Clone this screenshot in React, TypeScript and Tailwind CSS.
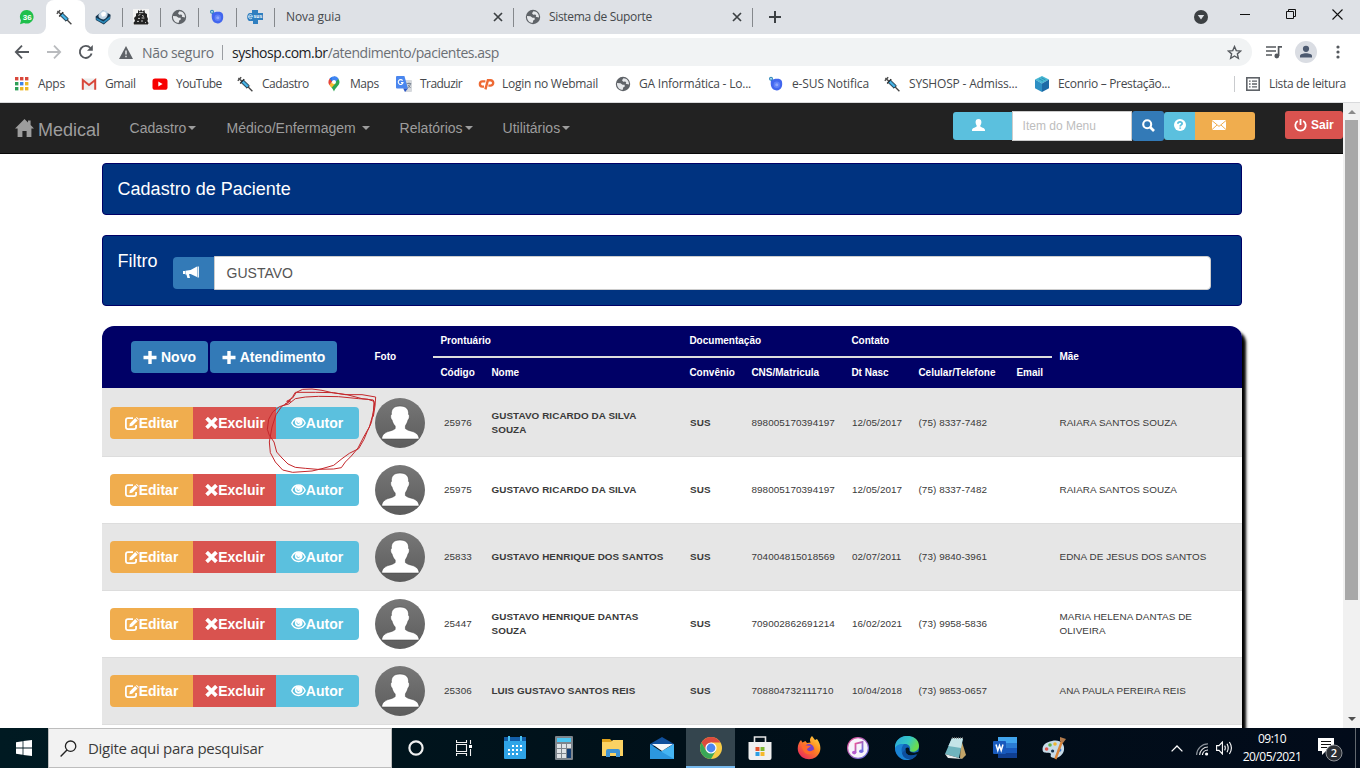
import React from "react";

type IconProps = { className?: string };

const Globe = () => (
  <svg width="16" height="16" viewBox="0 0 16 16">
    <circle cx="8" cy="8" r="7.2" fill="#5f6368" />
    <path d="M2 7 L5.5 7.2 L7.5 8.8 L9.6 8.8 L9.8 10.6 L8.2 11.6 L7.8 13.8 C4.2 14 1.8 11 2 7 Z" fill="#e6e8eb" />
    <path d="M8.4 2.2 L7 4.2 L8.2 5.8 L10.2 5.4 L11.2 6.6 L10.8 7.8 L14 8.6 C14.2 5 11.6 2 8.4 2.2 Z" fill="#e6e8eb" />
  </svg>
);

const Syringe = () => (
  <svg width="16" height="16" viewBox="0 0 16 16">
    <path d="M0.8 4.8 L4.2 1.2" stroke="#444" strokeWidth="1.3" />
    <path d="M1.4 2 L5 5.4" stroke="#555" strokeWidth="1.5" />
    <path d="M3.2 7.4 L7.2 3.2" stroke="#222" strokeWidth="1.5" />
    <path d="M4.2 6.6 L6.6 4.2 L12.4 9.8 L10 12.2 Z" fill="#2f9fd6" stroke="#26323c" strokeWidth="1" />
    <path d="M6 5.8 L10.6 10.2" stroke="#6cc4ea" strokeWidth="0.9" />
    <path d="M11.2 11 L15.4 15.2" stroke="#444" strokeWidth="1.3" />
  </svg>
);

const WhatsApp = () => (
  <svg width="16" height="16" viewBox="0 0 16 16">
    <path d="M8.2 1 A6.8 6.8 0 1 1 5 14 L1 15.2 L2 11.4 A6.8 6.8 0 0 1 8.2 1 Z" fill="#1fbf4c" />
    <text x="8.2" y="10.8" fontSize="8" fontWeight="700" fill="#fff" textAnchor="middle" fontFamily="Liberation Sans, sans-serif">36</text>
  </svg>
);

const BlueBox = () => (
  <svg width="16" height="16" viewBox="0 0 16 16">
    <path d="M.6 7.6 L8 1.4 L15.6 5.8 L15.2 10 L8.8 15.4 L.8 11 Z" fill="#15344e" />
    <path d="M1.4 8.8 L8.4 12.4 L15 7.2 L14.8 9.8 L8.8 14.6 L1.4 10.8 Z" fill="#2b89b8" />
    <path d="M3.4 7 C4 2 9 0 12 2.4 C13.8 5.4 12 9.4 8.4 10.4 C5.6 10 3.6 9 3.4 7 Z" fill="#c3d5e4" />
    <path d="M6 4.8 C7.4 2.4 9.8 2.2 11 4.2 L10.4 7 L7 7.8 Z" fill="#fff" />
  </svg>
);

const Crest = () => (
  <svg width="16" height="16" viewBox="0 0 16 16">
    <rect width="16" height="16" fill="#f4f4f4" />
    <path d="M5 1 L7 2.4 L8 .6 L9.4 2.4 L11.4 1 L12 4 L14 5 L14 7.4 L15 10 L14.4 12 L15.6 14 L15 15.4 L.8 15.4 L.6 13.6 L2 12 L1 9 L3 7 L3 4.6 L5 4 Z" fill="#222" />
    <path d="M6 3.6 H10.4 M5.4 6.4 L7.4 5.4 M9 6.4 L11 7.4 M5 9.4 H7 M8.6 9 H11.4 M4 12.4 H6 M8 12 H10 M12 13.6 H13" stroke="#ddd" strokeWidth="0.9" />
  </svg>
);

const Notifica = () => (
  <svg width="16" height="16" viewBox="0 0 16 16">
    <path d="M3 4 C6 2.6 12.6 1.6 13.8 5 C15.2 10 13 14.6 8.6 14.4 C3.6 14.2 2 9.6 3 4 Z" fill="#4266ee" />
    <circle cx="8.8" cy="8.8" r="3.2" fill="#5f80f8" />
    <circle cx="8.8" cy="8.8" r="1.5" fill="#8fa7fb" />
    <circle cx="3" cy="2.8" r="2" fill="#2a86b8" />
    <path d="M3 1.8 V3.8 M2 2.8 H4" stroke="#d8f0ff" strokeWidth="0.7" />
  </svg>
);

const ESus = () => (
  <svg width="16" height="16" viewBox="0 0 16 16">
    <path d="M5 1 H11 V4 H16 V11 H11 V15 H6 V12 H2 C-1 10 0 4 3 4 H5 Z" fill="#2f7fc0" />
    <path d="M1.6 7.8 H5.4 C5.2 4.8 1.6 5 1.6 7.8 C1.8 10.2 4.6 10 5.2 9" fill="none" stroke="#d6e8f6" strokeWidth="1" />
    <text x="6.6" y="9.4" fontSize="5" fontWeight="700" fill="#fff" fontFamily="Liberation Sans, sans-serif">sus</text>
  </svg>
);

const AppsGrid = () => (
  <svg width="14" height="14" viewBox="0 0 14 14">
    <g fill="#d9483b"><rect x="0" y="0" width="3.4" height="3.4" /><rect x="5" y="0" width="3.4" height="3.4" /><rect x="10" y="0" width="3.4" height="3.4" /></g>
    <rect x="0" y="5" width="3.4" height="3.4" fill="#2e9e57" /><rect x="5" y="5" width="3.4" height="3.4" fill="#3f83e8" /><rect x="10" y="5" width="3.4" height="3.4" fill="#eeb624" />
    <rect x="0" y="10" width="3.4" height="3.4" fill="#2e9e57" /><rect x="5" y="10" width="3.4" height="3.4" fill="#eeb624" /><rect x="10" y="10" width="3.4" height="3.4" fill="#eeb624" />
  </svg>
);

const Gmail = () => (
  <svg width="16" height="16" viewBox="0 0 16 16">
    <rect x="1" y="2.6" width="14" height="11.2" rx="1" fill="#eee" />
    <path d="M1.8 13.8 V4 L8 9 L14.2 4 V13.8" fill="none" stroke="#d8473a" strokeWidth="2" />
  </svg>
);

const YouTube = () => (
  <svg width="16" height="16" viewBox="0 0 16 16">
    <rect x="0.5" y="2.4" width="15" height="11.4" rx="2.6" fill="#f70000" />
    <path d="M6.3 5.6 L10.6 8 L6.3 10.5 Z" fill="#fff" />
  </svg>
);

const MapsPin = () => (
  <svg width="16" height="16" viewBox="0 0 16 16">
    <path d="M8 0.5 A5.6 5.6 0 0 1 13.5 6 C13.5 9.5 9.4 11.4 8 15.6 C7 12.8 5.4 11 4 9.4 L8 6 Z" fill="#2fa653" />
    <path d="M2.4 6.2 A5.6 5.6 0 0 1 3.8 2.4 L6.6 4.8 L3.8 9.3 C3 8.4 2.4 7.4 2.4 6.2 Z" fill="#e6443a" />
    <path d="M3.6 2.5 A5.6 5.6 0 0 1 6.4 .7 L8 4 L6 5.4 Z" fill="#1a73e8" />
    <path d="M6.2 .7 A5.6 5.6 0 0 1 12.6 2.8 L9 6.6 L5.4 3.6 Z" fill="#4285f4" />
    <path d="M3.4 9 L6.6 5.4 L9.4 7.6 L5.6 11.8 Z" fill="#f9bb2d" />
    <circle cx="8" cy="5.9" r="2" fill="#fff" />
  </svg>
);

const Translate = () => (
  <svg width="16" height="16" viewBox="0 0 16 16">
    <path d="M6 4 H15 Q16 4 16 5 V15 Q16 16 15 16 H9 Z" fill="#d6d9dd" />
    <path d="M1 0 H8.4 L12 12.6 H1 Q0 12.6 0 11.6 V1 Q0 0 1 0 Z" fill="#4a86ee" />
    <path d="M7.2 12.6 H12 L9 16 Z" fill="#2a56c6" />
    <path d="M6.6 4.6 A2.4 2.4 0 1 0 7 6.6 H5" fill="none" stroke="#fff" strokeWidth="1.1" />
    <path d="M10.6 7.6 H15.2 M13 6.6 V7.6 M14.4 7.8 C14 10 12.8 11.4 11.6 12 M12 9 L14.6 12" stroke="#6f7a8a" strokeWidth="0.9" fill="none" />
  </svg>
);

const CPanel = () => (
  <svg width="17" height="16" viewBox="0 0 17 16">
    <path d="M7.4 5.4 H4.6 A2.5 2.5 0 0 0 4.4 10.6 H6" fill="none" stroke="#ee6a34" strokeWidth="2.4" />
    <path d="M7.4 13.4 L9.9 4.2 H12.6 A2.6 2.6 0 0 1 12.4 9.6 H10.4" fill="none" stroke="#ee6a34" strokeWidth="2.4" />
  </svg>
);

const Cube = () => (
  <svg width="16" height="16" viewBox="0 0 16 16">
    <path d="M8 0 L15 3.6 L8 7.4 L1 3.6 Z" fill="#48b8d4" />
    <path d="M1 3.6 L8 7.4 V16 L1 12.2 Z" fill="#2d8fc4" />
    <path d="M15 3.6 L8 7.4 V16 L15 12.2 Z" fill="#1c6aa6" />
    <path d="M5 2.8 L9 5 M7.4 1.8 L11.4 3.8" stroke="#2c93b4" strokeWidth="1" />
  </svg>
);

const CloseX = () => (
  <svg width="10" height="10" viewBox="0 0 10 10"><path d="M1 1 L9 9 M9 1 L1 9" stroke="#3c4043" strokeWidth="1.7" /></svg>
);

const TabSep = () => <div className="h-[19px] w-px shrink-0 bg-[#85888c]" />;

function TabStrip() {
  return (
    <div className="flex h-[34px] items-center bg-[#dee1e6] font-['Open_Sans',sans-serif] text-[12px] text-[#45484c]">
      <div className="flex w-[46px] justify-center pl-[7px]"><WhatsApp /></div>
      <div className="relative flex h-[34px] w-[39px] items-center justify-center rounded-t-[8px] bg-white pr-[3px]">
        <Syringe />
        <svg className="absolute -left-[8px] bottom-0" width="8" height="8" viewBox="0 0 8 8"><path d="M8 0 V8 H0 A8 8 0 0 0 8 0" fill="#fff" /></svg>
        <svg className="absolute -right-[8px] bottom-0" width="8" height="8" viewBox="0 0 8 8"><path d="M0 0 V8 H8 A8 8 0 0 1 0 0" fill="#fff" /></svg>
      </div>
      <div className="flex w-[37px] justify-center pr-[1px]"><BlueBox /></div>
      <TabSep />
      <div className="flex w-[37px] justify-center pr-[1px]"><Crest /></div>
      <TabSep />
      <div className="flex w-[37px] justify-center pr-[1px]"><Globe /></div>
      <TabSep />
      <div className="flex w-[37px] justify-center pr-[1px]"><Notifica /></div>
      <TabSep />
      <div className="flex w-[37px] justify-center pr-[1px]"><ESus /></div>
      <TabSep />
      <div className="flex w-[238px] items-center justify-between pr-[10px] pl-[11px]">
        <span className="tracking-[-0.1px]">Nova guia</span><CloseX />
      </div>
      <TabSep />
      <div className="flex w-[238px] items-center pr-[10px] pl-[11px]">
        <Globe /><span className="ml-[8px] flex-1 whitespace-nowrap tracking-[-0.33px]">Sistema de Suporte</span><CloseX />
      </div>
      <TabSep />
      <svg className="ml-[16px]" width="12" height="12" viewBox="0 0 12 12"><path d="M6 0 V12 M0 6 H12" stroke="#3c4043" strokeWidth="2" /></svg>
      <div className="ml-auto flex items-start pb-[4px] pr-[17px]">
        <svg className="mt-[4px] mr-[32px]" width="14" height="14" viewBox="0 0 14 14"><circle cx="7" cy="7" r="7" fill="#3c4043" /><path d="M3.8 5 H10.2 L7 9.4 Z" fill="#dee1e6" /></svg>
        <svg className="mr-[36px]" width="10" height="14" viewBox="0 0 10 14"><path d="M0 8.5 H10" stroke="#111" /></svg>
        <svg className="mt-[3px] mr-[36px]" width="10" height="10" viewBox="0 0 10 10"><path d="M0.5 2.5 H7.5 V9.5 H0.5 Z M2.5 2.5 V0.5 H9.5 V7.5 H7.5" fill="none" stroke="#111" /></svg>
        <svg className="mt-[3px]" width="11" height="11" viewBox="0 0 11 11"><path d="M0.5 0.5 L10.5 10.5 M10.5 0.5 L0.5 10.5" stroke="#111" strokeWidth="1.1" /></svg>
      </div>
    </div>
  );
}

function Toolbar() {
  return (
    <div className="flex h-[36px] items-center bg-white pr-[16px] pl-[14px] font-['Open_Sans',sans-serif] text-[14px]">
      <svg width="16" height="16" viewBox="0 0 16 16"><path d="M15 8 H2 M8 1.6 L1.8 8 L8 14.4" fill="none" stroke="#55595e" strokeWidth="1.8" /></svg>
      <svg className="ml-[16px]" width="16" height="16" viewBox="0 0 16 16"><path d="M1 8 H14 M8 1.6 L14.2 8 L8 14.4" fill="none" stroke="#b9bbbe" strokeWidth="1.8" /></svg>
      <svg className="ml-[16px]" width="16" height="16" viewBox="0 0 16 16"><path d="M13.6 9.6 A6 6 0 1 1 12.4 4" fill="none" stroke="#55595e" strokeWidth="1.9" /><path d="M14.8 1 V6.8 H9 Z" fill="#55595e" /></svg>
      <div className="ml-[14px] flex h-[28px] w-[1144px] items-center rounded-full bg-[#f1f3f4] pr-[10px] pl-[11px]">
        <svg width="14" height="13" viewBox="0 0 14 13"><path d="M7 0 L14 13 H0 Z" fill="#5f6368" /><path d="M7 4.4 V8.6 M7 9.8 V11.2" stroke="#f1f3f4" strokeWidth="1.4" /></svg>
        <span className="ml-[9px] w-[80px] whitespace-nowrap text-[#6b6f74] tracking-[-0.34px]">Não seguro</span>
        <div className="mr-[9px] h-[15px] w-px bg-[#9a9da1]" />
        <span className="flex-1 whitespace-nowrap text-[#6b6f74] tracking-[-0.48px]"><span className="text-[#202124]">syshosp.com.br</span>/atendimento/pacientes.asp</span>
        <svg width="15" height="15" viewBox="0 0 24 24"><path d="M12 2.5 L14.8 9 L22 9.6 L16.6 14.2 L18.2 21.2 L12 17.5 L5.8 21.2 L7.4 14.2 L2 9.6 L9.2 9 Z" fill="none" stroke="#55595e" strokeWidth="2.2" /></svg>
      </div>
      <svg className="ml-[13px]" width="18" height="14" viewBox="0 0 18 14"><path d="M1 2 H11 M1 6 H11 M1 10 H7" stroke="#55595e" strokeWidth="1.7" /><path d="M13.6 11 V1.8 H17" stroke="#55595e" strokeWidth="1.7" fill="none" /><circle cx="11.8" cy="11" r="2.4" fill="#55595e" /></svg>
      <svg className="ml-[12px]" width="22" height="22" viewBox="0 0 22 22"><circle cx="11" cy="11" r="11" fill="#dadde3" /><circle cx="11" cy="7.8" r="3.1" fill="#4d5a70" /><path d="M5 16.6 V15 C5 11.4 17 11.4 17 15 V16.6 Z" fill="#4d5a70" /></svg>
      <svg className="ml-auto mr-[4px]" width="4" height="14" viewBox="0 0 4 14"><g fill="#55595e"><circle cx="2" cy="2" r="1.6" /><circle cx="2" cy="7" r="1.6" /><circle cx="2" cy="12" r="1.6" /></g></svg>
    </div>
  );
}

const bookmarks = [
  { icon: <AppsGrid />, label: "Apps", w: "w-[66px]", g: "gap-[9px] tracking-[-0.28px]" },
  { icon: <Gmail />, label: "Gmail", w: "w-[71px]", g: "gap-[8px] tracking-[-0.38px]" },
  { icon: <YouTube />, label: "YouTube", w: "w-[85px]", g: "gap-[8px] tracking-[-0.5px]" },
  { icon: <Syringe />, label: "Cadastro", w: "w-[89px]", g: "gap-[9px] tracking-[-0.45px]" },
  { icon: <MapsPin />, label: "Maps", w: "w-[70px]", g: "gap-[8px] tracking-[-0.45px]" },
  { icon: <Translate />, label: "Traduzir", w: "w-[82px]", g: "gap-[8px] tracking-[-0.55px]" },
  { icon: <CPanel />, label: "Login no Webmail", w: "w-[137px]", g: "gap-[7px] tracking-[-0.26px]" },
  { icon: <Globe />, label: "GA Informática - Lo...", w: "w-[153px]", g: "gap-[8px] tracking-[-0.22px]" },
  { icon: <Notifica />, label: "e-SUS Notifica", w: "w-[116px]", g: "gap-[8px] tracking-[-0.12px]" },
  { icon: <Syringe />, label: "SYSHOSP - Admiss...", w: "w-[150px]", g: "gap-[9px] tracking-[-0.18px]" },
  { icon: <Cube />, label: "Econrio – Prestação...", w: "w-[200px]", g: "gap-[8px] tracking-[-0.32px]" },
];

function Bookmarks() {
  return (
    <div className="flex h-[33px] items-center border-b border-[#d9dadc] bg-white pb-[4px] pl-[15px] font-['Open_Sans',sans-serif] text-[12px] text-[#45484c]">
      {bookmarks.map((b, i) => (
        <div key={i} className={`flex shrink-0 items-center whitespace-nowrap ${b.w} ${b.g}`}>{b.icon}<span>{b.label}</span></div>
      ))}
      <div className="h-[16px] w-px bg-[#c9cbce]" />
      <svg className="ml-[11px]" width="14" height="14" viewBox="0 0 14 14"><rect x="0.8" y="0.8" width="12.4" height="12.4" fill="none" stroke="#5f6368" strokeWidth="1.6" /><path d="M3 4.2 H4.6 M6 4.2 H11 M3 7 H4.6 M6 7 H11 M3 9.8 H4.6 M6 9.8 H11" stroke="#5f6368" strokeWidth="1.3" /></svg>
      <span className="ml-[9px] whitespace-nowrap tracking-[-0.34px]">Lista de leitura</span>
    </div>
  );
}

const Caret = ({ className = "" }: IconProps) => (
  <svg className={className} width="8" height="4" viewBox="0 0 8 4"><path d="M0 0 H8 L4 4 Z" fill="#9d9d9d" /></svg>
);

const UserIcon = () => (
  <svg width="13" height="12" viewBox="0 0 13 12"><path d="M6.5 0 C8.8 0 9.6 1.6 9.4 3.8 C9.2 5.4 8.4 6.2 8.2 7 C8.4 8.6 12.8 8.6 13 11 V12 H0 V11 C.2 8.6 4.6 8.6 4.8 7 C4.6 6.2 3.8 5.4 3.6 3.8 C3.4 1.6 4.2 0 6.5 0 Z" fill="#fff" /></svg>
);

const Envelope = () => (
  <svg width="14" height="10" viewBox="0 0 14 10"><rect width="14" height="10" fill="#fff" /><path d="M0 0.6 L7 6.4 L14 0.6 M0 9.6 L5 5 M14 9.6 L9 5" fill="none" stroke="#f0ad4e" strokeWidth="1" /></svg>
);

function NavBar() {
  return (
    <div className="flex h-[51px] shrink-0 border-b border-[#080808] bg-[#222] font-['Liberation_Sans',sans-serif] text-[14px] text-[#9d9d9d]">
      <div className="flex w-[129.6px] items-start pt-[15px] pl-[15px]">
        <svg className="mt-[1px]" width="19" height="18" viewBox="0 0 19 18"><path d="M9.5 0 L13 3.4 V1.6 H15.6 V6 L19 9.6 H16.4 V18 H11.6 V12 H7.4 V18 H2.6 V9.6 H0 Z" fill="#9d9d9d" /></svg>
        <span className="ml-[4px] text-[18px] leading-[24px]">Medical</span>
      </div>
      <div className="flex h-[50px] w-[97px] items-center"><span>Cadastro</span><Caret className="ml-[2px]" /></div>
      <div className="flex h-[50px] w-[173px] items-center"><span>Médico/Enfermagem</span><Caret className="ml-[6px]" /></div>
      <div className="flex h-[50px] w-[103px] items-center"><span>Relatórios</span><Caret className="ml-[2px]" /></div>
      <div className="flex h-[50px] items-center"><span>Utilitários</span><Caret className="ml-[2px]" /></div>
      <div className="ml-auto flex items-start pt-[8px]">
        <div className="mt-[1px] flex h-[28px] w-[59px] items-center justify-center rounded-l-[3px] bg-[#5bc0de] pr-[9px] pb-[2px]"><UserIcon /></div>
        <div className="flex h-[30px] w-[120px] items-center border border-[#ccc] bg-white pl-[9.6px] text-[12px] text-[#bdbdbd]">Item do Menu</div>
        <div className="flex h-[30px] w-[32px] items-center justify-center rounded-[3px] bg-[#337ab7] pb-[2px]">
          <svg width="13" height="13" viewBox="0 0 13 13"><circle cx="5.2" cy="5.2" r="4" fill="none" stroke="#fff" strokeWidth="2.1" /><path d="M8 8 L12 12" stroke="#fff" strokeWidth="2.6" /></svg>
        </div>
        <div className="mt-[1px] flex h-[28px] w-[31px] items-center justify-center rounded-l-[3px] bg-[#5bc0de] pb-[2px]">
          <svg width="12" height="12" viewBox="0 0 12 12"><circle cx="6" cy="6" r="6" fill="#fff" /><path d="M3.9 4.8 C3.9 2.4 8.2 2.4 8.1 4.6 C8 6 6.2 5.8 6.2 7.4 M6.2 8.4 V9.8" fill="none" stroke="#5bc0de" strokeWidth="1.8" /></svg>
        </div>
        <div className="mt-[1px] flex h-[28px] w-[60px] items-center justify-center rounded-r-[3px] bg-[#f0ad4e] pr-[12px] pb-[2px]"><Envelope /></div>
        <div className="ml-[30px] flex h-[28px] w-[58px] items-center rounded-[3px] bg-[#d9534f] pl-[9px] text-[12px] font-bold text-white">
          <svg className="mr-[4px]" width="13" height="13" viewBox="0 0 13 13"><path d="M3.8 2 A5.2 5.2 0 1 0 9.2 2" fill="none" stroke="#fff" strokeWidth="1.8" /><path d="M6.5 0 V6" stroke="#fff" strokeWidth="1.8" /></svg>
          Sair
        </div>
      </div>
    </div>
  );
}

const Plus = () => (
  <svg width="14" height="13" viewBox="0 0 14 13"><path d="M7 0 V13 M0.5 6.5 H13.5" stroke="#fff" strokeWidth="3.4" /></svg>
);
const EditIcon = () => (
  <svg width="14" height="13" viewBox="0 0 14 13"><path d="M8 1.2 H3 Q.9 1.2 .9 3.4 V10 Q.9 12.1 3 12.1 H9 Q11.1 12.1 11.1 10 V8" fill="none" stroke="#fff" strokeWidth="1.8" /><path d="M4.4 9.2 L4.8 6.4 L10.2 1 L12.6 3.4 L7.2 8.8 Z" fill="#fff" /><path d="M11 .5 L11.8 0 L14 2.2 L13.2 2.8 Z" fill="#fff" /></svg>
);
const RemoveIcon = () => (
  <svg width="13" height="12" viewBox="0 0 13 12"><path d="M1.6 1.2 L11.4 10.8 M11.4 1.2 L1.6 10.8" stroke="#fff" strokeWidth="3.8" /></svg>
);
const EyeIcon = () => (
  <svg width="15" height="12" viewBox="0 0 15 12"><path d="M.8 6 C3.6 -.6 11.4 -.6 14.2 6 C11.4 12 3.6 12 .8 6 Z" fill="none" stroke="#fff" strokeWidth="1.4" /><circle cx="7.7" cy="5" r="3.8" fill="#fff" /><path d="M5.8 4.6 C5.6 6.4 7.4 7 8.6 6" fill="none" stroke="#5bc0de" strokeWidth="0.9" /></svg>
);
const Avatar = () => (
  <svg width="50" height="50" viewBox="0 0 50 50">
    <defs><linearGradient id="av" x1="0" y1="0" x2="0" y2="1"><stop offset="0" stopColor="#777" /><stop offset="1" stopColor="#5c5c5c" /></linearGradient></defs>
    <circle cx="25" cy="25" r="25" fill="url(#av)" />
    <path d="M25 8 C31 8 34 11 33.6 16.5 C35 17 34.4 21 33 22 C32.4 25 31 26.4 30.4 28 V30.6 C33 33.2 38 32.8 41 35.2 C43.4 37 44 38.6 44 41 H6.8 C6.8 38.6 7.4 37 9.8 35.2 C12.8 32.8 17.6 33.2 20.2 30.6 V28 C18.6 26.4 17.6 24.6 17 22 C15.6 21 15 17 16.4 16.5 C16 11 18.8 8 25 8 Z" fill="#fff" stroke="#3c3c3c" strokeWidth="0.5" />
  </svg>
);

const patients = [
  { code: "25976", name: "GUSTAVO RICARDO DA SILVA SOUZA", cns: "898005170394197", date: "12/05/2017", phone: "(75) 8337-7482", mother: "RAIARA SANTOS SOUZA" },
  { code: "25975", name: "GUSTAVO RICARDO DA SILVA", cns: "898005170394197", date: "12/05/2017", phone: "(75) 8337-7482", mother: "RAIARA SANTOS SOUZA" },
  { code: "25833", name: "GUSTAVO HENRIQUE DOS SANTOS", cns: "704004815018569", date: "02/07/2011", phone: "(73) 9840-3961", mother: "EDNA DE JESUS DOS SANTOS" },
  { code: "25447", name: "GUSTAVO HENRIQUE DANTAS SOUZA", cns: "709002862691214", date: "16/02/2021", phone: "(73) 9958-5836", mother: "MARIA HELENA DANTAS DE OLIVEIRA" },
  { code: "25306", name: "LUIS GUSTAVO SANTOS REIS", cns: "708804732111710", date: "10/04/2018", phone: "(73) 9853-0657", mother: "ANA PAULA PEREIRA REIS" },
];

function PatientRow({ p, i }: { p: (typeof patients)[number]; i: number }) {
  return (
    <div className={`flex items-center border-[#ddd] pl-[8px] ${i === 0 ? "h-[68px] pt-[2px]" : "h-[67px] border-t"} ${i % 2 === 0 ? "bg-[#e6e6e6]" : "bg-white"}`}>
      <div className="flex h-[32px] w-[249px] overflow-hidden rounded-[4px] text-[14px] font-bold tracking-normal text-white">
        <div className="flex w-[83px] items-center justify-center bg-[#f0ad4e]"><EditIcon />Editar</div>
        <div className="flex w-[83px] items-center justify-center bg-[#d9534f] pl-[1px]"><RemoveIcon />Excluir</div>
        <div className="flex w-[83px] items-center justify-center bg-[#5bc0de] pr-[1px]"><EyeIcon />Autor</div>
      </div>
      <div className="ml-[16px] w-[69px]"><Avatar /></div>
      <div className="w-[47.5px]">{p.code}</div>
      <div className="w-[198.5px] pr-[20px] font-bold text-[#3a3a3a]">{p.name}</div>
      <div className="w-[61.5px] font-bold tracking-[0.1px]">SUS</div>
      <div className="w-[100.5px]">{p.cns}</div>
      <div className="w-[66.5px]">{p.date}</div>
      <div className="w-[141px]">{p.phone}</div>
      <div className="w-[150px]">{p.mother}</div>
    </div>
  );
}

function TableHead() {
  return (
    <div className="flex h-[62px] rounded-t-[12px] bg-[#006] text-[10px] leading-[14px] font-bold text-white">
      <div className="flex w-[272.5px] gap-[2px] pt-[15px] pl-[29px] text-[14px]">
        <div className="flex h-[32px] w-[77px] items-center justify-center gap-[4px] rounded-[4px] bg-[#337ab7]"><Plus />Novo</div>
        <div className="flex h-[32px] w-[127px] items-center justify-center gap-[4px] rounded-[4px] bg-[#337ab7]"><Plus />Atendimento</div>
      </div>
      <div className="flex w-[58.5px] items-center">Foto</div>
      <div className="w-[619px]">
        <div className="flex h-[30px] items-center pl-[7.4px]">
          <div className="w-[249px]">Prontuário</div><div className="w-[162px]">Documentação</div><div>Contato</div>
        </div>
        <div className="h-[2px] bg-[#ddd]" />
        <div className="flex h-[30px] items-center pl-[7.4px]">
          <div className="w-[51px]">Código</div><div className="w-[198px]">Nome</div><div className="w-[62px]">Convênio</div><div className="w-[100px]">CNS/Matricula</div><div className="w-[67px]">Dt Nasc</div><div className="w-[98px]">Celular/Telefone</div><div>Email</div>
        </div>
      </div>
      <div className="flex items-center pl-[7.4px]">Mãe</div>
    </div>
  );
}

const Scribble = () => (
  <svg className="pointer-events-none absolute top-[56px] left-[160px]" width="124" height="100" viewBox="0 0 372 300">
    <g fill="none" stroke="#c4272b" strokeWidth="3" strokeLinejoin="round">
      <path d="M69 66 L86 57 L74 58 L92 48 L103 31 L122 22 L150 21 L180 25 L215 33 L255 38 L300 50 L334 54 L338 66 L332 100 L322 135 L305 165 L288 198 L268 222 L250 240 L238 257 L215 261 L166 262 L130 259 L100 256 L78 246 L60 228 L44 210 L36 180 L22 160 L16 142 L20 112 L32 90 L52 74 L80 66 L100 50 L130 45 L170 43 L230 44 L290 50 L318 52 L336 58 L334 92 L328 122 L316 148 L306 172 L290 200 L262 214 L240 230 L215 250 L180 260 L150 267 L92 271 L62 264 L40 240 L25 212 L22 180 L30 135 L42 98 L60 72 L76 64 L92 44 L100 31 L160 31 L215 32 L250 38 L300 38 L341 45 L339 72 L334 104" />
    </g>
  </svg>
);

function Page() {
  return (
    <div className="flex h-[625px] flex-col overflow-hidden font-['Liberation_Sans',sans-serif]">
      <NavBar />
      <div className="mt-[9px] ml-[102px] w-[1140px]">
        <div className="h-[52px] rounded-[4px] border border-[#006] bg-[#003380] pt-[15px] pl-[14.6px] text-[18px] leading-[20px] text-white">Cadastro de Paciente</div>
        <div className="mt-[20px] flex h-[71px] rounded-[4px] border border-[#006] bg-[#003380] pl-[14.6px] text-white">
          <div className="w-[55.4px] pt-[15px] text-[18px] leading-[20px]">Filtro</div>
          <div className="mt-[21px] flex h-[32px] w-[41px] items-center rounded-l-[4px] bg-[#337ab7] pl-[10px]">
            <svg width="17" height="14" viewBox="0 0 17 14"><path d="M0 5 H2 V8 H0 Z M2.4 4.8 L7.6 4 L14 .6 V11 L7.6 8 H6 L7 12 H4.4 L3.4 8.4 H2.4 Z" fill="#fff" /><path d="M15.2 .6 V11.4" stroke="#e6eef5" strokeWidth="1.6" /></svg>
          </div>
          <div className="mt-[20px] flex h-[34px] w-[997px] items-center rounded-r-[4px] border border-[#ccc] bg-white pl-[11.6px] text-[14px] text-[#555]">GUSTAVO</div>
        </div>
        <div className="relative mt-[20px] h-[460px] rounded-t-[12px] bg-white shadow-[4px_5px_3px_#000]">
          <TableHead />
          <div className="border-b border-[#ddd] text-[9.9px] leading-[14px] tracking-[0.07px] text-[#3a3a3a]">
            {patients.map((p, i) => <PatientRow key={p.code} p={p} i={i} />)}
          </div>
          <Scribble />
        </div>
      </div>
    </div>
  );
}

function Scrollbar() {
  return (
    <div className="flex h-[625px] w-[17px] flex-col items-center bg-[#f1f1f1]">
      <svg className="mt-[7px]" width="8" height="4" viewBox="0 0 8 4"><path d="M0 4 H8 L4 0 Z" fill="#8a8a8a" /></svg>
      <div className="mt-[6px] h-[480px] w-[13px] bg-[#a8a8a8]" />
      <svg className="mt-auto mb-[7px]" width="8" height="4" viewBox="0 0 8 4"><path d="M0 0 H8 L4 4 Z" fill="#505050" /></svg>
    </div>
  );
}

const taskIcons = [
  <svg key="cal" width="24" height="24" viewBox="0 0 24 24"><rect x="1" y="1" width="22" height="22" rx="1" fill="#2fa4e7" /><rect x="1" y="1" width="22" height="4" fill="#135ea8" /><path d="M6 0 V5 M18 0 V5" stroke="#48c3f4" strokeWidth="2" /><path d="M9 10 H19 M5 14 H19 M5 18 H15" stroke="#fff" strokeWidth="2" strokeDasharray="2 2" /></svg>,
  <svg key="calc" width="20" height="24" viewBox="0 0 20 24"><rect x="1" width="18" height="24" rx="1" fill="#7d858c" /><rect x="3" y="2" width="14" height="4" fill="#4cc6f2" /><g fill="#dfe3e6"><rect x="3" y="8" width="4" height="4" /><rect x="8" y="8" width="4" height="4" /><rect x="13" y="8" width="4" height="4" /><rect x="3" y="13" width="4" height="4" /><rect x="8" y="13" width="4" height="4" /><rect x="3" y="18" width="4" height="4" /><rect x="8" y="18" width="4" height="4" /></g><rect x="13" y="13" width="4" height="9" fill="#143e73" /></svg>,
  <svg key="fold" width="24" height="24" viewBox="0 0 24 24"><path d="M1 3 H9 L11 5 H22 V20 H1 Z" fill="#e0a21c" /><path d="M1 6 H10 L12 4 H22 V20 H1 Z" fill="#fbd263" /><path d="M5 21 V15 Q5 13 7 13 H17 Q19 13 19 15 V21 H15 V17 H9 V21 Z" fill="#3f93d3" /></svg>,
  <svg key="mail" width="24" height="24" viewBox="0 0 24 24"><path d="M0 8 L12 1 L24 8 V10 H0 Z" fill="#10509c" /><path d="M0 8 L12 16 L24 8 V23 H0 Z" fill="#2c97df" /><path d="M24 8 V23 L11 15.4 Z" fill="#45b5f3" /><path d="M2 8 H23 L12 15 Z" fill="#f5f8fb" /></svg>,
  <svg key="chr" width="24" height="24" viewBox="0 0 24 24"><circle cx="12" cy="12" r="11" fill="#f7cb46" /><path d="M2.5 6.5 A11 11 0 0 1 21.5 6.5 H12 L7.2 14.8 Z" fill="#dd4b3e" /><path d="M2.5 6.5 A11 11 0 0 0 12 23 L16.8 14.7 L7.2 14.7 Z" fill="#3aa757" /><circle cx="12" cy="12" r="5.6" fill="#fff" /><circle cx="12" cy="12" r="4.4" fill="#4c87f0" /></svg>,
  <svg key="sto" width="24" height="24" viewBox="0 0 24 24"><path d="M6.5 7 V1 H17.5 V7" fill="none" stroke="#e5e5e5" strokeWidth="1.6" /><path d="M0.5 6 H23.5 V22 Q23.5 24 21.5 24 H2.5 Q.5 24 .5 22 Z" fill="#f0f0f0" /><rect x="7.5" y="11" width="4" height="4" fill="#e5532d" /><rect x="12.5" y="11" width="4" height="4" fill="#7db72f" /><rect x="7.5" y="16" width="4" height="4" fill="#2d9fe3" /><rect x="12.5" y="16" width="4" height="4" fill="#f6b92b" /></svg>,
  <svg key="ff" width="24" height="24" viewBox="0 0 24 24"><defs><linearGradient id="ffg" x1="1" y1="0" x2="0.2" y2="1"><stop offset="0" stopColor="#ffe14a" /><stop offset=".45" stopColor="#ff8a1f" /><stop offset="1" stopColor="#e8265d" /></linearGradient></defs><path d="M15 0 L18 4 L20 3 C23 7 24 11 23 15 C20 26 4 26 1 15 C0 10 2 6 4 4 L5.4 6.4 L8.4 5 L10 7 L13.6 6.6 C12.4 4 13 2 15 0 Z" fill="url(#ffg)" /><circle cx="12" cy="13" r="5" fill="#7542c9" /><path d="M4 9 C8 8 10 10 14 10 L10 13 C10 16 16 16 18 12 C18 20 8 20 6 14 Z" fill="#ff6a2b" /></svg>,
  <svg key="it" width="24" height="24" viewBox="0 0 24 24"><defs><linearGradient id="itg" x1="0" y1="0" x2="1" y2="1"><stop offset="0" stopColor="#f25696" /><stop offset="1" stopColor="#5a72e8" /></linearGradient></defs><circle cx="12" cy="12" r="11" fill="url(#itg)" /><circle cx="12" cy="12" r="9.8" fill="#f7f4fa" /><path d="M9.5 16.5 V7.6 L16.5 6 V15" fill="none" stroke="url(#itg)" strokeWidth="1.8" /><ellipse cx="8.2" cy="16.6" rx="2.2" ry="1.8" fill="#b65cd0" /><ellipse cx="15.2" cy="15.2" rx="2.2" ry="1.8" fill="#7469df" /></svg>,
  <svg key="ed" width="24" height="24" viewBox="0 0 24 24"><defs><linearGradient id="edg" x1="0" y1="0" x2="1" y2=".4"><stop offset="0" stopColor="#2aa5dc" /><stop offset=".6" stopColor="#35c8c4" /><stop offset="1" stopColor="#6bdc4e" /></linearGradient></defs><circle cx="12" cy="12" r="12" fill="#1161b4" /><path d="M0 10 C2 -4 24 -3 24 10 C24 15 18 17 14.6 15 C16 13 15 8 10 8 C5 8 0 10 0 15 Z" fill="url(#edg)" /><path d="M9 8.2 C4 13 7 22 15 23.4 C8 26 0 20 0 12 C2 8 6 7.4 9 8.2 Z" fill="#1b84d4" /><path d="M14.6 15 C17 17.6 21 16.6 23.6 15.4 L24 18 C14 22 9 18 10.6 12.6 C11.4 11.4 13 11 14 12 Z" fill="#021521" /><path d="M11 13 C9 19 15 21 22 18 C18 26 8 24 7 17 Z" fill="#0d4f9e" /></svg>,
  <svg key="np" width="24" height="24" viewBox="0 0 24 24"><path d="M17 3 L22 19 L18 23 L16 22 Z" fill="#c2a468" /><path d="M8 2 H19 L15 22 L1 18 Z" fill="#6fb4be" /><path d="M8 2 H19 L17 12 L4.4 10 Z" fill="#c4e4e8" /><path d="M1 18 L15 22 L18 23 L4 22 Z" fill="#e7ecec" /><path d="M8 2 H19" stroke="#777" strokeDasharray="1 1" strokeWidth="1.4" /></svg>,
  <svg key="wd" width="24" height="24" viewBox="0 0 24 24"><rect x="5" y="1" width="19" height="6" fill="#41a5ee" /><rect x="5" y="7" width="19" height="5" fill="#2b7cd3" /><rect x="5" y="12" width="19" height="5" fill="#185abd" /><rect x="5" y="17" width="19" height="5" fill="#103f91" /><rect x="0" y="5" width="13" height="13" rx="1" fill="#185abd" /><path d="M3 8.5 L4.8 14.5 L6.5 9.5 L8.2 14.5 L10 8.5" fill="none" stroke="#fff" strokeWidth="1.5" /></svg>,
  <svg key="pt" width="24" height="24" viewBox="0 0 24 24"><path d="M10 5 C18 3 23 8 22 14 C21 20 14 24 9 21 C8 19 10 18 8 17 C5 16 1 18 .6 14 C0 9 4 6 10 5 Z" fill="#c7dbe8" /><circle cx="4.6" cy="13" r="1.8" fill="#e3554b" /><circle cx="8" cy="9" r="1.8" fill="#5eb04c" /><circle cx="13" cy="8" r="1.8" fill="#f0b52f" /><circle cx="10.6" cy="15" r="1.6" fill="#16324c" /><circle cx="17.6" cy="14" r="1.8" fill="#3978c9" /><path d="M20.4 4 L13.4 23" stroke="#d9853b" strokeWidth="2.4" /><path d="M18 1 L24 3 L21 7 L18 5 Z" fill="#b07a4c" /></svg>,
];

function Taskbar() {
  return (
    <div className="flex h-[40px] items-center bg-linear-to-r from-[#001a22] via-[#001019] to-[#020b1a] font-['Open_Sans',sans-serif]">
      <div className="flex w-[48px] justify-center">
        <svg width="16" height="16" viewBox="0 0 16 16"><path d="M0 2.2 L6.6 1.2 V7.6 H0 Z M7.4 1.1 L16 0 V7.6 H7.4 Z M0 8.4 H6.6 V14.8 L0 13.8 Z M7.4 8.4 H16 V16 L7.4 14.9 Z" fill="#fff" /></svg>
      </div>
      <div className="flex h-[40px] w-[344px] items-center border border-[#bdbdbd] bg-[#f2f2f2] pl-[11px]">
        <svg width="17" height="17" viewBox="0 0 17 17"><circle cx="10.6" cy="6.2" r="5.2" fill="none" stroke="#222" strokeWidth="1.3" /><path d="M7 10 L0.6 16.4" stroke="#222" strokeWidth="1.4" /></svg>
        <span className="ml-[11px] whitespace-nowrap text-[15px] tracking-[-0.3px] text-[#3b3b3b]">Digite aqui para pesquisar</span>
      </div>
      <div className="flex w-[48px] justify-center"><svg width="16" height="16" viewBox="0 0 16 16"><circle cx="8" cy="8" r="6.6" fill="none" stroke="#f0f0f0" strokeWidth="2.2" /></svg></div>
      <div className="flex w-[50px] justify-center pr-[2px]">
        <svg width="16" height="16" viewBox="0 0 16 16"><path d="M0.5 4.5 H10.5 V11.5 H0.5 Z M0.5 0 V2.5 H10.5 V0 M0.5 16 V13.5 H10.5 V16 M14.5 0 V4 M14.5 9 V16" fill="none" stroke="#f0f0f0" strokeWidth="1.1" /><rect x="13" y="5" width="3" height="3" fill="#fff" /></svg>
      </div>
      {taskIcons.map((icon, i) => (
        <div key={i} className={`flex h-[40px] w-[49px] items-center justify-center ${i === 4 ? "border-b-2 border-[#76b9ed] bg-[#34454e] pt-[2px]" : ""}`}>{icon}</div>
      ))}
      <div className="ml-auto flex items-center pr-[4px] text-white">
        <svg width="12" height="7" viewBox="0 0 12 7"><path d="M0.6 6.4 L6 1 L11.4 6.4" fill="none" stroke="#fff" strokeWidth="1.3" /></svg>
        <svg className="mt-[3px] ml-[13px]" width="13" height="13" viewBox="0 0 13 13"><g fill="none" strokeWidth="1.2"><path d="M0.6 12 A11.4 11.4 0 0 1 12 .8" stroke="#8a9199" /><path d="M3.6 12 A8.4 8.4 0 0 1 12 4" stroke="#ddd" /><path d="M6.4 12 A5.6 5.6 0 0 1 12 7" stroke="#fff" /></g><circle cx="10.6" cy="11" r="1.6" fill="#fff" /></svg>
        <svg className="ml-[7px]" width="17" height="14" viewBox="0 0 17 14"><path d="M0.6 4.6 H3 L6.4 1 V13 L3 9.4 H.6 Z M8.6 4.6 Q10 7 8.6 9.4 M11 2.8 Q13.4 7 11 11.2 M13.4 1 Q17.4 7 13.4 13" fill="none" stroke="#fff" strokeWidth="1.1" /></svg>
        <div className="ml-[9px] flex w-[60px] flex-col items-center pb-[1px] text-[12px] leading-[18px] tracking-[-0.5px] whitespace-nowrap"><span>09:10</span><span>20/05/2021</span></div>
        <svg className="mt-[2px] ml-[16px]" width="25" height="25" viewBox="0 0 25 25"><path d="M0 1 H16 V14 H8 L4 18 V14 H0 Z" fill="#fff" /><path d="M3 4.5 H13 M3 7.5 H13 M3 10.5 H9" stroke="#111" /><circle cx="16" cy="16" r="8" fill="#2b2f35" stroke="#8e9196" /><text x="16" y="20" fontSize="11" fontWeight="600" textAnchor="middle" fill="#fff" fontFamily="Open Sans, sans-serif">2</text></svg>
        <div className="ml-[12px] h-[40px] w-px bg-[#62686f]" />
      </div>
    </div>
  );
}

export default function App() {
  return (
    <div className="flex h-[768px] w-[1360px] flex-col overflow-hidden bg-white">
      <TabStrip />
      <Toolbar />
      <Bookmarks />
      <div className="flex h-[625px]">
        <div className="w-[1343px]"><Page /></div>
        <Scrollbar />
      </div>
      <Taskbar />
    </div>
  );
}
